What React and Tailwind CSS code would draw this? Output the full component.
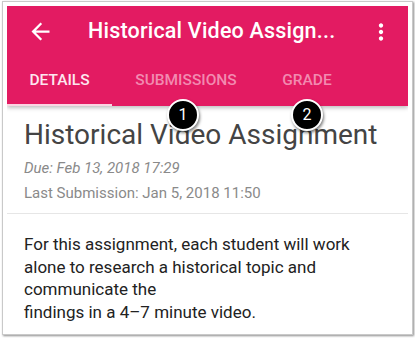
import React from 'react';

function Badge({ n, className }) {
  return (
    <div
      className={`absolute top-[97px] w-[32px] h-[32px] rounded-full bg-black border-2 border-white shadow-[1px_2px_3px_rgba(0,0,0,0.5)] flex items-center justify-center text-white text-[16px] ${className}`}
    >
      {n}
    </div>
  );
}

export default function App() {
  return (
    <div className="w-[415px] h-[339px] bg-white pt-[1px] pl-[2px]" style={{ fontFamily: 'Roboto, "Liberation Sans", sans-serif' }}>
      <div className="relative w-[411px] h-[334px] border border-[#c9c9c9] shadow-[1px_1px_2px_rgba(0,0,0,0.45)] p-[4px] bg-white">
        <div className="w-[401px] h-[325px] bg-white overflow-hidden">
          <div className="bg-[#e31b62] h-[100px] shadow-[0_2px_4px_rgba(0,0,0,0.25)] relative">
            <div className="h-[51px] flex items-center">
              <div className="w-[81px] pl-[20px] flex items-center">
                <svg width="27" height="27" viewBox="0 0 24 24" fill="white">
                  <path d="M20 11H7.83l5.59-5.59L12 4l-8 8 8 8 1.41-1.41L7.83 13H20v-2z" />
                </svg>
              </div>
              <div className="flex-1 text-white text-[21.5px] font-medium tracking-[0.2px]">Historical Video Assign...</div>
              <div className="w-[40px] flex items-center">
                <svg width="26" height="26" viewBox="0 0 24 24" fill="white">
                  <path d="M12 8c1.1 0 2-.9 2-2s-.9-2-2-2-2 .9-2 2 .9 2 2 2zm0 2c-1.1 0-2 .9-2 2s.9 2 2 2 2-.9 2-2-.9-2-2-2zm0 6c-1.1 0-2 .9-2 2s.9 2 2 2 2-.9 2-2-.9-2-2-2z" />
                </svg>
              </div>
            </div>
            <div className="h-[49px] flex text-[15.5px] font-medium">
              <div className="w-[105px] flex flex-col">
                <div className="flex-1 flex items-center justify-center text-[#fde6ef] pt-[1px]">DETAILS</div>
                <div className="h-[2px] bg-[#fbd4e2]" />
              </div>
              <div className="w-[148px] flex items-center justify-center text-[#f28ab0] pb-[1px]">SUBMISSIONS</div>
              <div className="w-[94px] flex items-center justify-center text-[#f28ab0] pb-[1px]">GRADE</div>
            </div>
          </div>
          <div className="px-[17px] pt-[12px]">
            <div className="text-[28px] leading-[34px] text-[#444444]">Historical Video Assignment</div>
            <div className="text-[15px] italic text-[#8a8a8a] mt-[6px] leading-[20px]">Due: Feb 13, 2018 17:29</div>
            <div className="text-[15px] text-[#8a8a8a] mt-[5px] leading-[20px]">Last Submission: Jan 5, 2018 11:50</div>
          </div>
          <div className="h-px bg-[#e6e6e6] mt-[10px]" />
          <div className="px-[17px] pt-[19px] text-[17px] leading-[22.5px] text-[#222222]">
            For this assignment, each student will work<br />
            alone to research a historical topic and<br />
            communicate the<br />
            findings in a 4–7 minute video.
          </div>
        </div>
        <Badge n="1" className="left-[164px]" />
        <Badge n="2" className="left-[288px]" />
      </div>
    </div>
  );
}
